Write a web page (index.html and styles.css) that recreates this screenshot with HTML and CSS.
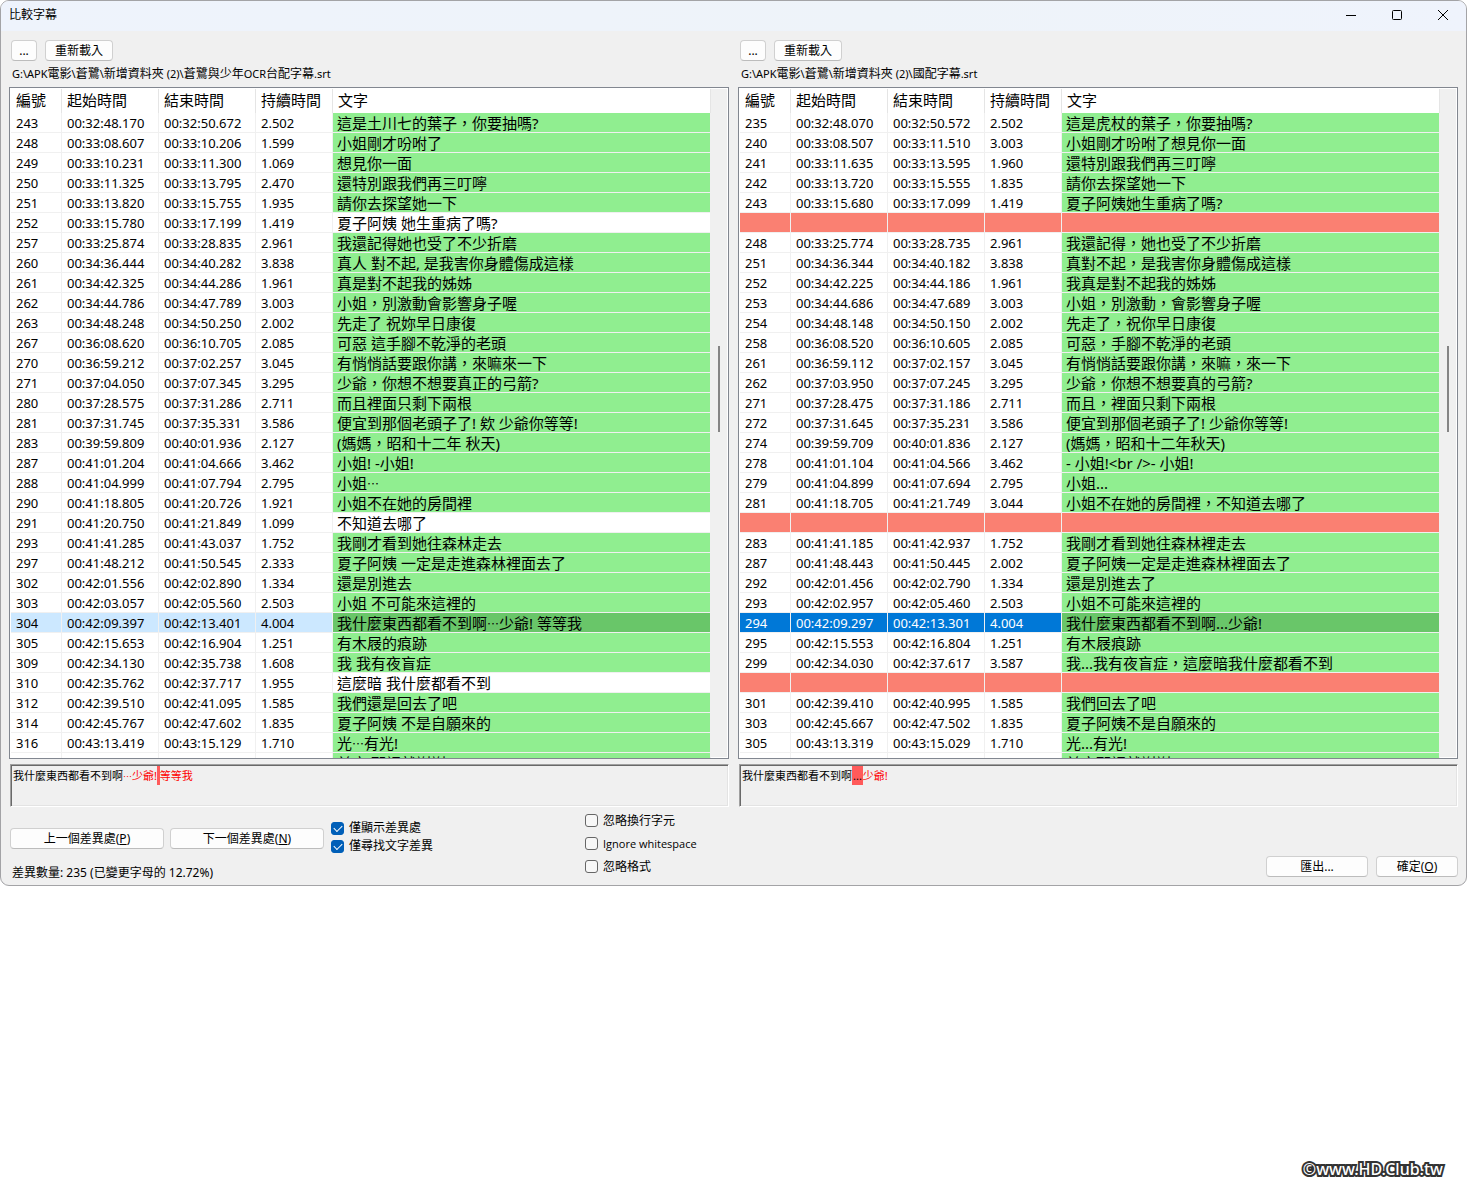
FILE: index.html
```html
<!DOCTYPE html>
<html lang="zh-Hant">
<head>
<meta charset="utf-8">
<title>比較字幕</title>
<link rel="stylesheet" href="styles.css">
</head>
<body>
<main class="window">
  <header class="titlebar">
    <h1 class="title">比較字幕</h1>
    <div class="caption-buttons">
      <button class="caption" aria-label="最小化"><svg width="12" height="12" viewBox="0 0 12 12"><path d="M1 6.500H11"/></svg></button>
      <button class="caption" aria-label="最大化"><svg width="12" height="12" viewBox="0 0 12 12"><rect x="1.500" y="1.500" width="9" height="9" rx="1"/></svg></button>
      <button class="caption" aria-label="關閉"><svg width="12" height="12" viewBox="0 0 12 12"><path d="M1 1L11 11M11 1L1 11"/></svg></button>
    </div>
  </header>
  <div class="content">
    <div class="panes">
      <section class="pane">
        <div class="toolbar"><button class="btn browse">...</button><button class="btn reload">重新載入</button></div>
        <p class="path">G:\APK<span class="han">電影</span>\<span class="han">蒼鷺</span>\<span class="han">新增資料夾</span> (2)\<span class="han">蒼鷺與少年</span>OCR<span class="han">台配字幕</span>.srt</p>
        <div class="list">
          <table class="grid">
            <colgroup><col class="c-num"><col class="c-time"><col class="c-time"><col class="c-dur"><col></colgroup>
            <thead><tr><th>編號</th><th>起始時間</th><th>結束時間</th><th>持續時間</th><th>文字</th></tr></thead>
            <tbody id="left-rows"></tbody>
          </table>
          <div class="scrollbar"><div class="thumb"></div></div>
        </div>
        <div class="preview">我什麼東西都看不到啊<span class="changed"><span class="dots">…</span>少爺!</span><mark> </mark><span class="changed">等等我</span></div>
      </section>
      <section class="pane">
        <div class="toolbar"><button class="btn browse">...</button><button class="btn reload">重新載入</button></div>
        <p class="path">G:\APK<span class="han">電影</span>\<span class="han">蒼鷺</span>\<span class="han">新增資料夾</span> (2)\<span class="han">國配字幕</span>.srt</p>
        <div class="list">
          <table class="grid">
            <colgroup><col class="c-num"><col class="c-time"><col class="c-time"><col class="c-dur"><col></colgroup>
            <thead><tr><th>編號</th><th>起始時間</th><th>結束時間</th><th>持續時間</th><th>文字</th></tr></thead>
            <tbody id="right-rows"></tbody>
          </table>
          <div class="scrollbar"><div class="thumb"></div></div>
        </div>
        <div class="preview">我什麼東西都看不到啊<mark class="glyphs">...</mark><span class="changed">少爺!</span></div>
      </section>
    </div>
    <footer class="footer">
      <div class="nav">
        <div class="nav-buttons"><button class="btn">上一個差異處(<u>P</u>)</button><button class="btn">下一個差異處(<u>N</u>)</button></div>
        <p class="status">差異數量: 235 (已變更字母的 12.72%)</p>
      </div>
      <div class="checks filters">
        <label><input type="checkbox" checked>僅顯示差異處</label>
        <label><input type="checkbox" checked>僅尋找文字差異</label>
      </div>
      <div class="checks ignores">
        <label><input type="checkbox">忽略換行字元</label>
        <label class="latin"><input type="checkbox">Ignore whitespace</label>
        <label><input type="checkbox">忽略格式</label>
      </div>
      <div class="actions"><button class="btn export">匯出...</button><button class="btn ok">確定(<u>O</u>)</button></div>
    </footer>
  </div>
</main>
<p class="watermark">©www.HD.Club.tw</p>
<script src="rows.js"></script>
</body>
</html>
```
FILE: rows.js
```js
// Fields: number | start | end | duration | text | row state
const left = `243|00:32:48.170|00:32:50.672|2.502|這是土川七的葉子，你要抽嗎?
248|00:33:08.607|00:33:10.206|1.599|小姐剛才吩咐了
249|00:33:10.231|00:33:11.300|1.069|想見你一面
250|00:33:11.325|00:33:13.795|2.470|還特別跟我們再三叮嚀
251|00:33:13.820|00:33:15.755|1.935|請你去探望她一下
252|00:33:15.780|00:33:17.199|1.419|夏子阿姨 她生重病了嗎?|plain
257|00:33:25.874|00:33:28.835|2.961|我還記得她也受了不少折磨
260|00:34:36.444|00:34:40.282|3.838|真人 對不起, 是我害你身體傷成這樣
261|00:34:42.325|00:34:44.286|1.961|真是對不起我的姊姊
262|00:34:44.786|00:34:47.789|3.003|小姐，別激動會影響身子喔
263|00:34:48.248|00:34:50.250|2.002|先走了 祝妳早日康復
267|00:36:08.620|00:36:10.705|2.085|可惡 這手腳不乾淨的老頭
270|00:36:59.212|00:37:02.257|3.045|有悄悄話要跟你講，來嘛來一下
271|00:37:04.050|00:37:07.345|3.295|少爺，你想不想要真正的弓箭?
280|00:37:28.575|00:37:31.286|2.711|而且裡面只剩下兩根
281|00:37:31.745|00:37:35.331|3.586|便宜到那個老頭子了! 欸 少爺你等等!
283|00:39:59.809|00:40:01.936|2.127|(媽媽，昭和十二年 秋天)
287|00:41:01.204|00:41:04.666|3.462|小姐! -小姐!
288|00:41:04.999|00:41:07.794|2.795|小姐…
290|00:41:18.805|00:41:20.726|1.921|小姐不在她的房間裡
291|00:41:20.750|00:41:21.849|1.099|不知道去哪了|plain
293|00:41:41.285|00:41:43.037|1.752|我剛才看到她往森林走去
297|00:41:48.212|00:41:50.545|2.333|夏子阿姨 一定是走進森林裡面去了
302|00:42:01.556|00:42:02.890|1.334|還是別進去
303|00:42:03.057|00:42:05.560|2.503|小姐 不可能來這裡的
304|00:42:09.397|00:42:13.401|4.004|我什麼東西都看不到啊…少爺! 等等我|current
305|00:42:15.653|00:42:16.904|1.251|有木屐的痕跡
309|00:42:34.130|00:42:35.738|1.608|我 我有夜盲症
310|00:42:35.762|00:42:37.717|1.955|這麼暗 我什麼都看不到|plain
312|00:42:39.510|00:42:41.095|1.585|我們還是回去了吧
314|00:42:45.767|00:42:47.602|1.835|夏子阿姨 不是自願來的
316|00:43:13.419|00:43:15.129|1.710|光…有光!
||||前方 那裡就謝謝`;

const right = `235|00:32:48.070|00:32:50.572|2.502|這是虎杖的葉子，你要抽嗎?
240|00:33:08.507|00:33:11.510|3.003|小姐剛才吩咐了想見你一面
241|00:33:11.635|00:33:13.595|1.960|還特別跟我們再三叮嚀
242|00:33:13.720|00:33:15.555|1.835|請你去探望她一下
243|00:33:15.680|00:33:17.099|1.419|夏子阿姨她生重病了嗎?
|||||missing
248|00:33:25.774|00:33:28.735|2.961|我還記得，她也受了不少折磨
251|00:34:36.344|00:34:40.182|3.838|真對不起，是我害你身體傷成這樣
252|00:34:42.225|00:34:44.186|1.961|我真是對不起我的姊姊
253|00:34:44.686|00:34:47.689|3.003|小姐，別激動，會影響身子喔
254|00:34:48.148|00:34:50.150|2.002|先走了，祝你早日康復
258|00:36:08.520|00:36:10.605|2.085|可惡，手腳不乾淨的老頭
261|00:36:59.112|00:37:02.157|3.045|有悄悄話要跟你講，來嘛，來一下
262|00:37:03.950|00:37:07.245|3.295|少爺，你想不想要真的弓箭?
271|00:37:28.475|00:37:31.186|2.711|而且，裡面只剩下兩根
272|00:37:31.645|00:37:35.231|3.586|便宜到那個老頭子了! 少爺你等等!
274|00:39:59.709|00:40:01.836|2.127|(媽媽，昭和十二年秋天)
278|00:41:01.104|00:41:04.566|3.462|- 小姐!<br />- 小姐!
279|00:41:04.899|00:41:07.694|2.795|小姐...
281|00:41:18.705|00:41:21.749|3.044|小姐不在她的房間裡，不知道去哪了
|||||missing
283|00:41:41.185|00:41:42.937|1.752|我剛才看到她往森林裡走去
287|00:41:48.443|00:41:50.445|2.002|夏子阿姨一定是走進森林裡面去了
292|00:42:01.456|00:42:02.790|1.334|還是別進去了
293|00:42:02.957|00:42:05.460|2.503|小姐不可能來這裡的
294|00:42:09.297|00:42:13.301|4.004|我什麼東西都看不到啊...少爺!|current focused
295|00:42:15.553|00:42:16.804|1.251|有木屐痕跡
299|00:42:34.030|00:42:37.617|3.587|我...我有夜盲症，這麼暗我什麼都看不到
|||||missing
301|00:42:39.410|00:42:40.995|1.585|我們回去了吧
303|00:42:45.667|00:42:47.502|1.835|夏子阿姨不是自願來的
305|00:43:13.319|00:43:15.029|1.710|光...有光!
||||前方那裡就謝謝`;

function fill(id, source) {
  const body = document.getElementById(id);
  for (const line of source.split("\n")) {
    const fields = line.split("|");
    const row = body.insertRow();
    row.className = fields[5] || "differs";
    for (const value of fields.slice(0, 5)) {
      const cell = row.insertCell();
      // Ellipses take the centred form
      for (const part of value.split(/(…)/)) {
        if (part === "…") {
          const dots = document.createElement("span");
          dots.className = "dots";
          dots.textContent = part;
          cell.append(dots);
        } else {
          cell.append(part);
        }
      }
    }
  }
}

fill("left-rows", left);
fill("right-rows", right);
```
FILE: styles.css
```css
* { box-sizing: border-box; }

body {
  margin: 0;
  min-height: 100vh;
  display: flex;
  flex-direction: column;
  background: #fff;
  color: #000;
  font: 12px/18px "Noto Sans", "Noto Sans CJK TC", sans-serif;
}

h1, p { margin: 0; font-size: 12px; font-weight: 400; }
button, input { font: inherit; color: inherit; margin: 0; }

.window {
  border: 1px solid #a3a3a6;
  border-radius: 9px;
  background: #f0f0f0;
  overflow: hidden;
}

.titlebar {
  display: flex;
  justify-content: space-between;
  height: 30px;
  padding-left: 8px;
  line-height: 28px;
  background: linear-gradient(90deg, #eef3fc, #eef3f9 60%, #eff3fc);
}
.caption-buttons { display: flex; }
.caption {
  display: grid;
  place-items: center;
  width: 46px;
  height: 28px;
  padding: 0;
  border: 0;
  background: none;
}
.caption svg { fill: none; stroke: #000; }

.content { padding: 9px 8px 3px; }
.panes { display: grid; grid-template-columns: 1fr 1fr; gap: 9px; }
.pane { min-width: 0; }

.toolbar { display: flex; gap: 8px; padding-left: 2px; }
.btn {
  height: 21px;
  padding: 0;
  line-height: 18px;
  border: 1px solid #d0d0d0;
  border-bottom-color: #bcbcbc;
  border-radius: 4px;
  background: #fdfdfd;
}
.browse { width: 26px; }
.reload { width: 68px; }
.path {
  height: 26px;
  padding: 0 3px;
  font-size: 11px;
  line-height: 26px;
  white-space: nowrap;
  overflow: hidden;
}
.han { font-size: 12px; }

.list {
  display: flex;
  height: 672px;
  padding: 1px;
  border: 1px solid #828790;
  background: #fff;
  overflow: hidden;
}
.grid {
  flex: 1;
  min-width: 0;
  height: max-content;
  table-layout: fixed;
  border-collapse: separate;
  border-spacing: 0;
}
.c-num { width: 51px; }
.c-time { width: 97px; }
.c-dur { width: 77px; }
.grid th {
  height: 24px;
  padding: 0 5px 2px;
  border-right: 1px solid #e5e5e5;
  font-size: 15px;
  font-weight: 400;
  line-height: 22px;
  text-align: left;
}
.grid td {
  height: 20px;
  padding: 2px 5px 0;
  border-right: 1px solid #f0f0f0;
  border-bottom: 1px solid #f0f0f0;
  font-size: 13px;
  line-height: 17px;
  white-space: nowrap;
  overflow: hidden;
}
.grid td:last-child { padding-left: 4px; font-size: 15px; }
.differs td:last-child { background: #90ee90; }
.missing td { background: #fa8072; }
.current td { background: #cce8ff; }
.focused td { background: #0078d7; color: #fff; }
.current td:last-child { background: #69c669; color: #000; }
.dots {
  font-family: "Noto Sans CJK TC", sans-serif;
  font-size: 12px;
  line-height: 1;
}

.scrollbar { width: 16px; background: #f0f0f0; }
.thumb { width: 2px; height: 86px; margin: 257px 0 0 7px; background: #858585; }

.preview {
  height: 43px;
  margin: 5px 0 0 1px;
  padding: 2px;
  border: 1px solid;
  border-color: #a0a0a0 #fff #fff #a0a0a0;
  box-shadow: inset 1px 1px #696969, inset -1px -1px #e3e3e3;
  font-size: 11px;
  line-height: 18px;
}
.preview .dots { font-size: 9px; }
.changed { color: #f00; }
mark { padding: 2px 0; background: #ff5a5a; color: #000; }
.glyphs { padding: 2px 1px; }

.footer { display: flex; padding-left: 1px; }
.nav { padding-top: 21px; }
.nav-buttons { display: flex; gap: 6px; }
.nav-buttons .btn { width: 154px; }
.status { padding: 15px 2px 0; }

.checks { display: flex; flex-direction: column; }
.checks label { display: flex; align-items: center; gap: 5px; height: 18px; }
.filters { width: 254px; margin-left: 7px; padding-top: 12px; }
.ignores { padding-top: 2px; }
.ignores label { height: 23px; }
.ignores .latin { font-family: "Open Sans", sans-serif; font-size: 11px; }
input[type="checkbox"] {
  appearance: none;
  width: 13px;
  height: 13px;
  border: 1px solid #666;
  border-radius: 3px;
  background: #f7f7f7;
}
input[type="checkbox"]:checked {
  display: grid;
  place-items: center;
  border-color: #005fb8;
  background: #005fb8;
}
input[type="checkbox"]:checked::before {
  content: "";
  width: 7px;
  height: 4px;
  border: solid #fff;
  border-width: 0 0 1px 1px;
  transform: translateY(-1px) rotate(-45deg);
}

.actions {
  display: flex;
  align-items: flex-end;
  gap: 8px;
  margin-left: auto;
  padding-bottom: 5px;
}
.export { width: 102px; }
.ok { width: 82px; }

.watermark {
  margin-top: auto;
  padding: 0 24px 24px;
  font-size: 16px;
  line-height: 20px;
  font-weight: 500;
  text-align: right;
  color: #fff;
  -webkit-text-stroke: 4px #333;
  paint-order: stroke fill;
}
```
